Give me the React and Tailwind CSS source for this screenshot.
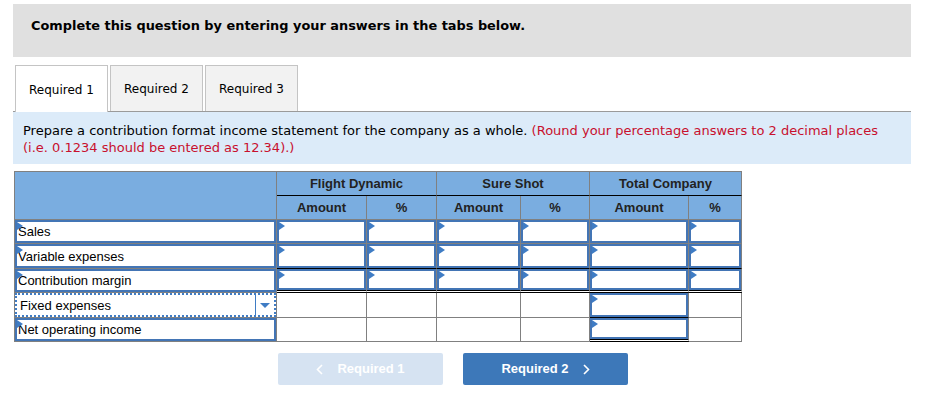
const Tri = () => (
  <span className="absolute left-0 top-0 w-0 h-0 border-y-[4px] border-y-transparent border-l-[6px] border-l-[#3f7cc4]" />
);

const Input = ({ children }) => (
  <div className="relative h-full border-2 border-[#4375b5] bg-white flex items-center pl-[1px] pt-[1px] text-[13px] text-black">
    <Tri />
    {children}
  </div>
);

const head = "bg-[#7aade0] border-r border-b border-[#808080] flex items-center justify-center font-bold text-[13px] text-[#222]";
const cell = "border-r border-b border-[#808080] bg-white";

const App = () => {
  return (
    <div className="min-h-screen bg-white px-[13px] pt-[4px] text-black" style={{ fontFamily: '"DejaVu Sans", Verdana, sans-serif' }}>
      {/* Header */}
      <div className="bg-[#e0e0e0] h-[53px] pt-[13px] pl-[18px] w-[898px]">
        <div className="font-bold text-[12.9px] leading-[17px]">Complete this question by entering your answers in the tabs below.</div>
      </div>

      {/* Tabs */}
      <div className="mt-[8px] w-[898px] border-b border-[#9a9a9a] flex gap-[2px] pl-[2px]">
        <div className="w-[93px] h-[47px] border border-b-0 border-[#c4c4c4] bg-white flex items-center justify-center pt-[1px] text-[12px] -mb-px">Required 1</div>
        <div className="w-[93px] h-[46px] border border-b-0 border-[#c4c4c4] bg-[#f2f2f2] flex items-center justify-center pt-[1px] text-[12px]">Required 2</div>
        <div className="w-[93px] h-[46px] border border-b-0 border-[#c4c4c4] bg-[#f2f2f2] flex items-center justify-center pt-[1px] text-[12px]">Required 3</div>
      </div>

      {/* Instructions */}
      <div className="w-[898px] bg-[#dcebf9] pt-[10px] pb-[8px] pl-[10px] pr-[10px] text-[13px] leading-[17px]">
        Prepare a contribution format income statement for the company as a whole.{" "}
        <span className="text-[#c8102e]">(Round your percentage answers to 2 decimal places (i.e. 0.1234 should be entered as 12.34).)</span>
      </div>

      {/* Table */}
      <div
        className="mt-[7px] ml-[1px] w-[728px] grid grid-cols-[262px_90px_70px_84px_69px_99px_53px] grid-rows-[24px_24px_24px_25px_24px_25px_24px] border-l border-t border-[#808080]"
        style={{ fontFamily: '"Liberation Sans", Arial, sans-serif' }}
      >
        <div className={`${head} row-span-2`}></div>
        <div className={`${head} col-span-2 border-b-black`}>Flight Dynamic</div>
        <div className={`${head} col-span-2 border-b-black`}>Sure Shot</div>
        <div className={`${head} col-span-2 border-b-black`}>Total Company</div>
        <div className={head}>Amount</div>
        <div className={head}>%</div>
        <div className={head}>Amount</div>
        <div className={head}>%</div>
        <div className={head}>Amount</div>
        <div className={head}>%</div>

        {/* Sales */}
        <div className={cell}><Input>Sales</Input></div>
        {[0, 1, 2, 3, 4, 5].map((i) => (
          <div key={"s" + i} className={cell}><Input /></div>
        ))}

        {/* Variable expenses */}
        <div className={cell}><Input>Variable expenses</Input></div>
        {[0, 1, 2, 3, 4, 5].map((i) => (
          <div key={"v" + i} className={`${cell} border-b-black`}><Input /></div>
        ))}

        {/* Contribution margin */}
        <div className={cell}><Input>Contribution margin</Input></div>
        {[0, 1, 2, 3, 4, 5].map((i) => (
          <div key={"c" + i} className={`${cell} border-b-[3px] border-double border-b-black`}><Input /></div>
        ))}

        {/* Fixed expenses */}
        <div className={cell}>
          <div className="h-full border-2 border-dotted border-[#3f7cc4] flex bg-white">
            <div className="flex-1 flex items-center pl-[3px] pt-[1px] text-[13px]">Fixed expenses</div>
            <div className="w-[19px] border-l border-[#3f7cc4] flex items-center justify-center">
              <span className="w-0 h-0 border-x-[5px] border-x-transparent border-t-[5px] border-t-[#3f7cc4]" />
            </div>
          </div>
        </div>
        <div className={cell}></div>
        <div className={cell}></div>
        <div className={cell}></div>
        <div className={cell}></div>
        <div className={`${cell} border-b-black`}><Input /></div>
        <div className={cell}></div>

        {/* Net operating income */}
        <div className={cell}><Input>Net operating income</Input></div>
        <div className={cell}></div>
        <div className={cell}></div>
        <div className={cell}></div>
        <div className={cell}></div>
        <div className={`${cell} border-b-[3px] border-double border-b-black`}><Input /></div>
        <div className={cell}></div>
      </div>

      {/* Buttons */}
      <div className="mt-[11px] pl-[265px] flex gap-[20px]" style={{ fontFamily: '"Liberation Sans", Arial, sans-serif' }}>
        <button className="w-[165px] h-[32px] rounded-[2px] bg-[#d6e3f2] text-white font-bold text-[13px] flex items-center justify-center gap-[14px]">
          <svg width="7" height="11" viewBox="0 0 7 11" fill="none" stroke="white" strokeWidth="1.6">
            <polyline points="6,1 1.5,5.5 6,10" />
          </svg>
          Required 1
        </button>
        <button className="w-[165px] h-[32px] rounded-[2px] bg-[#3d78b9] text-white font-bold text-[13px] flex items-center justify-center gap-[14px]">
          Required 2
          <svg width="7" height="11" viewBox="0 0 7 11" fill="none" stroke="white" strokeWidth="1.6">
            <polyline points="1,1 5.5,5.5 1,10" />
          </svg>
        </button>
      </div>
    </div>
  );
};

export default App;
